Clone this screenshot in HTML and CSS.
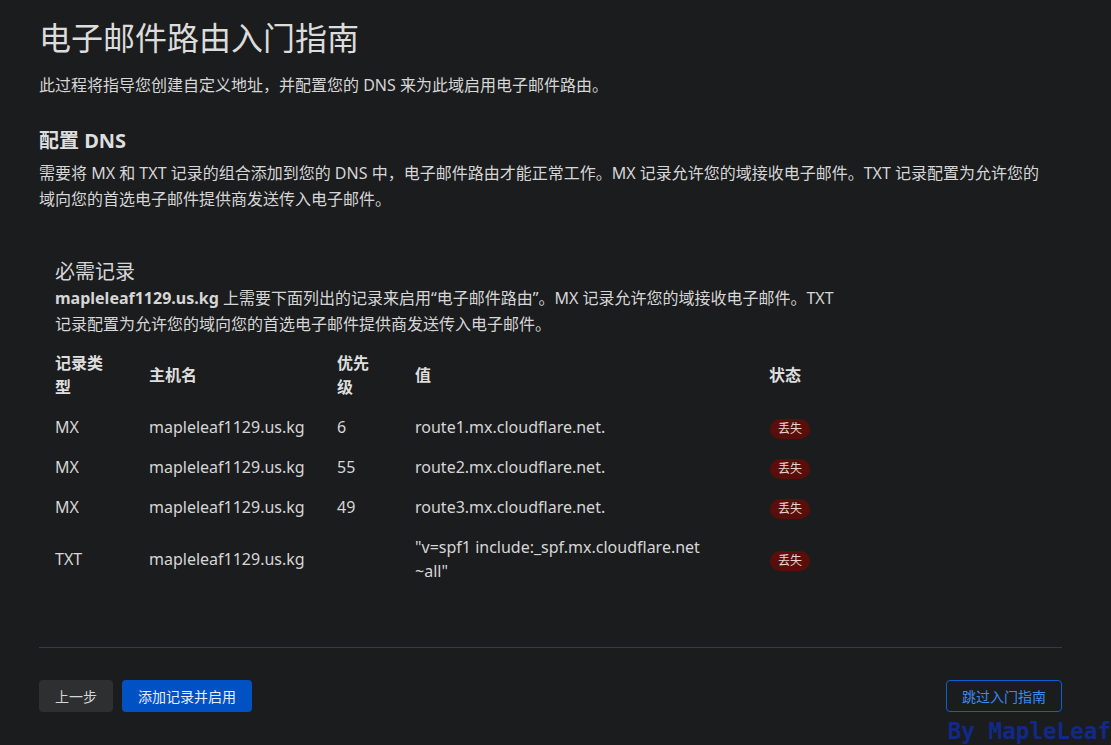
FILE: index.html
```html
<!DOCTYPE html>
<html lang="zh-CN">
<head>
<meta charset="utf-8">
<title>电子邮件路由入门指南</title>
<link rel="stylesheet" href="styles.css">
</head>
<body>
<main class="page">
  <h1 class="title">电子邮件路由入门指南</h1>
  <p class="lead">此过程将指导您创建自定义地址，并配置您的 DNS 来为此域启用电子邮件路由。</p>

  <h2 class="section-title">配置 DNS</h2>
  <p class="section-text">需要将 MX 和 TXT 记录的组合添加到您的 DNS 中，电子邮件路由才能正常工作。MX 记录允许您的域接收电子邮件。TXT 记录配置为允许您的域向您的首选电子邮件提供商发送传入电子邮件。</p>

  <section class="card">
    <h3 class="card-title">必需记录</h3>
    <p class="card-text"><strong>mapleleaf1129.us.kg</strong> 上需要下面列出的记录来启用“电子邮件路由”。MX 记录允许您的域接收电子邮件。TXT 记录配置为允许您的域向您的首选电子邮件提供商发送传入电子邮件。</p>
    <table class="records">
      <colgroup>
        <col class="c-type"><col class="c-host"><col class="c-prio"><col class="c-value"><col class="c-status">
      </colgroup>
      <thead>
        <tr><th>记录类型</th><th>主机名</th><th>优先级</th><th>值</th><th>状态</th></tr>
      </thead>
      <tbody>
        <tr><td>MX</td><td>mapleleaf1129.us.kg</td><td>6</td><td class="value">route1.mx.cloudflare.net.</td><td><span class="badge">丢失</span></td></tr>
        <tr><td>MX</td><td>mapleleaf1129.us.kg</td><td>55</td><td class="value">route2.mx.cloudflare.net.</td><td><span class="badge">丢失</span></td></tr>
        <tr><td>MX</td><td>mapleleaf1129.us.kg</td><td>49</td><td class="value">route3.mx.cloudflare.net.</td><td><span class="badge">丢失</span></td></tr>
        <tr><td>TXT</td><td>mapleleaf1129.us.kg</td><td></td><td class="value">"v=spf1 include:_spf.mx.cloudflare.net ~all"</td><td><span class="badge">丢失</span></td></tr>
      </tbody>
    </table>
  </section>

  <hr class="divider">

  <div class="actions">
    <div class="actions-left">
      <button class="btn btn-secondary">上一步</button>
      <button class="btn btn-primary">添加记录并启用</button>
    </div>
    <button class="btn btn-outline">跳过入门指南</button>
  </div>
</main>
<div class="watermark">By MapleLeaf</div>
</body>
</html>
```
FILE: styles.css
```css
html, body {
  margin: 0;
  padding: 0;
  background: #1b1c1e;
  height: 100%;
  overflow: hidden;
}
body {
  font-family: "Noto Sans", "Noto Sans CJK SC", sans-serif;
  color: #d6d6d6;
  font-size: 16px;
}
.page {
  padding: 0 49px 0 39px;
}
.title {
  margin: 18px 0 0;
  font-size: 32px;
  line-height: 40px;
  font-weight: 400;
  color: #dcdcdc;
}
.lead {
  margin: 14px 0 0;
  font-size: 16px;
  line-height: 26px;
}
.section-title {
  margin: 29px 0 0;
  font-size: 20px;
  line-height: 28px;
  font-weight: 700;
  color: #dedede;
}
.section-text {
  margin: 5px 0 0;
  max-width: 1010px;
  font-size: 16px;
  line-height: 26px;
}
.card {
  margin: 46px 0 0;
  padding: 0 16px;
}
.card-title {
  margin: 0;
  font-size: 20px;
  line-height: 28px;
  font-weight: 400;
}
.card-text {
  margin: -1px 0 0;
  max-width: 788px;
  font-size: 16px;
  line-height: 26px;
}
.card-text strong { font-weight: 700; }
.records {
  margin-top: 6px;
  border-collapse: collapse;
  table-layout: fixed;
  width: 800px;
  font-size: 16px;
}
.c-type { width: 94px; }
.c-host { width: 188px; }
.c-prio { width: 78px; }
.c-value { width: 354px; }
.c-status { width: 86px; }
.records th, .records td {
  text-align: left;
  vertical-align: middle;
  padding: 8px 32px 8px 0;
  line-height: 24px;
}
.records td.value {
  padding-right: 56px;
}
.records th {
  font-weight: 700;
  color: #dedede;
}
.badge {
  display: inline-block;
  padding: 0 8px;
  height: 20px;
  line-height: 20px;
  font-size: 12px;
  border-radius: 10px;
  background: #5a0e09;
  color: #e8d4d0;
  margin-left: 1px;
}
.divider {
  margin: 56px 0 0;
  border: 0;
  border-top: 1px solid #3a3b3e;
}
.actions {
  margin-top: 32px;
  display: flex;
  justify-content: space-between;
  align-items: center;
}
.actions-left {
  display: flex;
  gap: 9px;
}
.btn {
  font-family: inherit;
  font-size: 14px;
  height: 32px;
  padding: 0 15px;
  border-radius: 4px;
  border: 1px solid transparent;
  cursor: pointer;
}
.btn-secondary {
  background: #2d2f31;
  color: #d6d6d6;
}
.btn-primary {
  background: #0051c3;
  color: #e8eefb;
}
.btn-outline {
  background: transparent;
  border-color: #0b5fd1;
  color: #3a8bf0;
}
.watermark {
  position: absolute;
  right: 0;
  bottom: 1px;
  font-family: "DejaVu Sans Mono", monospace;
  font-weight: 700;
  font-size: 22.6px;
  color: #12298a;
  pointer-events: none;
  white-space: nowrap;
}
```
